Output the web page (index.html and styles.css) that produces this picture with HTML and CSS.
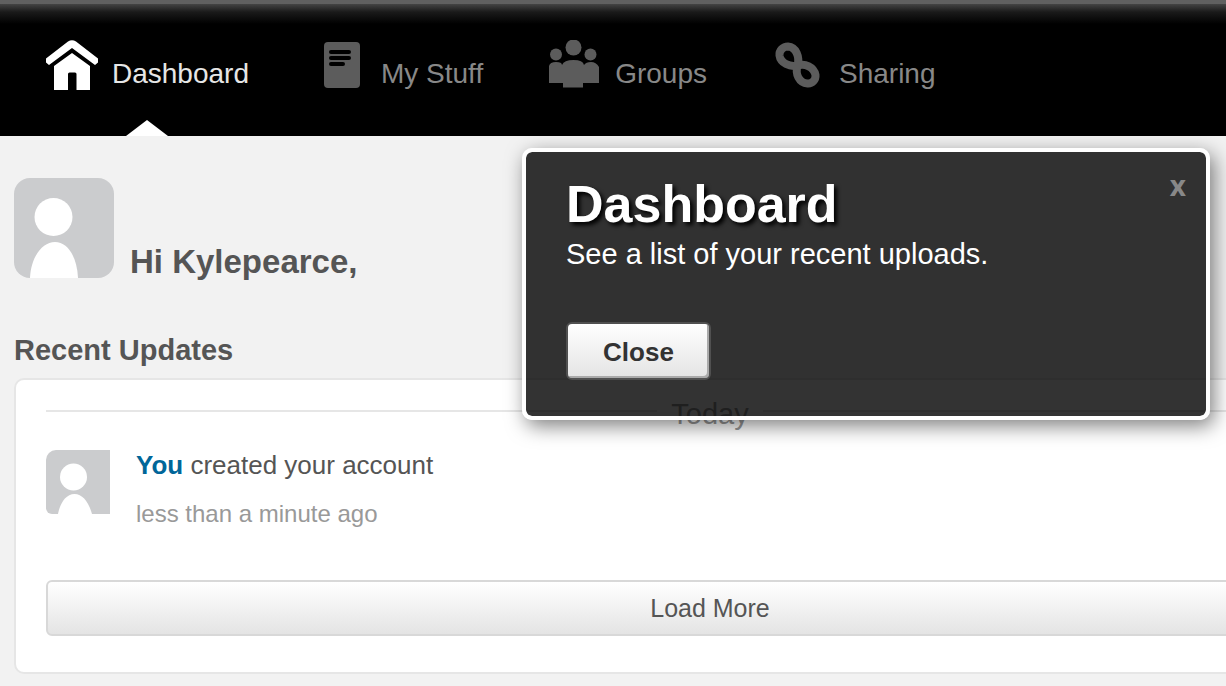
FILE: index.html
```
<!DOCTYPE html>
<html lang="en">
<head>
  <title>Dashboard</title>
  <meta charset="UTF-8">
  <link rel="stylesheet" href="styles.css">
</head>
<body>
  <header class="header">
    <nav class="main-nav">
      <a href="#" class="nav-item active">
        <svg class="nav-icon" viewBox="0 0 52 50" aria-hidden="true">
          <path d="M0 18.500 22 1.500Q26-1.200 30 1.500L52 18.500V22.500L49 25 26 8 3 25 0 22.500Z"/>
          <path d="M8 26 26 13 44 26V50H30.500V34Q30.500 32.500 29 32.500H23.500Q22 32.500 22 34V50H8Z"/>
        </svg>
        <span>Dashboard</span>
      </a>
      <a href="#" class="nav-item">
        <svg class="nav-icon" viewBox="0 0 52 50" aria-hidden="true">
          <rect x="9" y="2" width="36" height="46" rx="4"/>
          <path class="ink" d="M16 12H34M16 18H34M16 24H28"/>
        </svg>
        <span>My Stuff</span>
      </a>
      <a href="#" class="nav-item">
        <svg class="nav-icon" viewBox="0 0 52 50" aria-hidden="true">
          <circle cx="24.500" cy="7.500" r="8"/>
          <circle cx="7" cy="14.500" r="6"/>
          <circle cx="41.500" cy="14.500" r="6"/>
          <path d="M0 43V26Q1 22 7 22T13 25Q15 20 24.500 20T35 25Q37 22 42 22T50 27V43H34V47.500H14V43Z"/>
        </svg>
        <span>Groups</span>
      </a>
      <a href="#" class="nav-item">
        <svg class="nav-icon" viewBox="0 0 52 50" aria-hidden="true">
          <path class="loop" d="M24.500 25.500C27 17 23 7 15 6.500 10 6.500 6 10.500 6.500 15.500 7.500 23 17 27.500 24.500 25.500 32 23 41 27 42.500 35 43 40 39 44 34.500 43.500 26 43 22 34 24.500 25.500Z"/>
        </svg>
        <span>Sharing</span>
      </a>
    </nav>
  </header>

  <main class="content">
    <div class="greeting">
      <svg class="avatar" viewBox="0 0 100 100" role="img" aria-label="Kylepearce">
        <rect width="100" height="100" fill="#cbccce"/>
        <circle cx="39.500" cy="39" r="19"/>
        <path d="M16 100C17 79 28 64 41 64S63 79 64 100Z"/>
      </svg>
      <h1>Hi Kylepearce,</h1>
    </div>

    <h2 class="section-title">Recent Updates</h2>
    <section class="panel">
      <div class="day">
        <span class="day-label">Today</span>
      </div>
      <div class="update">
        <svg class="avatar-small" viewBox="0 0 64 64" role="img" aria-label="You">
          <rect width="64" height="64" fill="#cbccce"/>
          <circle cx="27.500" cy="27" r="13.500"/>
          <path d="M12 64C14 53 20 44 28.500 44S43 53 46 64Z"/>
        </svg>
        <div>
          <p class="update-text"><a href="#">You</a> created your account</p>
          <p class="update-time">less than a minute ago</p>
        </div>
      </div>
      <button type="button" class="load-more">Load More</button>
    </section>
  </main>

  <div class="tour" role="dialog" aria-labelledby="tourTitle">
    <button type="button" class="tour-x" aria-label="Dismiss">x</button>
    <h2 id="tourTitle">Dashboard</h2>
    <p>See a list of your recent uploads.</p>
    <button type="button" class="tour-close">Close</button>
  </div>
</body>
</html>
```
FILE: styles.css
```
* {
  box-sizing: border-box;
}
html {
  overflow-x: hidden;
}
body {
  position: relative;
  margin: 0;
  min-height: 100vh;
  overflow-x: hidden;
  font-family: "Liberation Sans", Arial, sans-serif;
  color: #555;
  background-color: #f2f2f2;
}
h1, h2, p {
  margin: 0;
}
button {
  font-family: inherit;
  cursor: pointer;
}

/* Navigation */
.header {
  border-top: 4px solid #606060;
  background: #000 linear-gradient(#444, #1a1a1a 8px, #000 20px) no-repeat;
}
.main-nav {
  display: flex;
  gap: 66px;
  padding: 36px 46px 0;
}
.nav-item {
  position: relative;
  display: flex;
  gap: 14px;
  height: 96px;
  font-size: 28px;
  line-height: 34px;
  color: #888;
  text-decoration: none;
  white-space: nowrap;
}
.nav-item span {
  padding-top: 17px;
}
.nav-item.active {
  color: #e6e6e6;
}
.nav-item.active::after {
  content: "";
  position: absolute;
  left: 50%;
  bottom: 0;
  margin-left: -21px;
  border: 21px solid transparent;
  border-top-width: 0;
  border-bottom: 16px solid #fff;
}
.nav-icon {
  width: 52px;
  height: 50px;
  fill: #5c5c5c;
}
.active .nav-icon {
  fill: #fff;
}
.nav-icon .ink {
  stroke: #000;
  stroke-width: 4;
  stroke-linecap: round;
}
.nav-icon .loop {
  fill: none;
  stroke: #5c5c5c;
  stroke-width: 8;
}

/* Page content runs past the right edge of the window */
.content {
  margin-right: -180px;
  padding: 42px 0 12px 14px;
}
.greeting {
  display: flex;
  align-items: flex-end;
  gap: 16px;
}
.greeting h1 {
  font-size: 33px;
  line-height: 32px;
}
.avatar,
.avatar-small {
  flex: none;
  fill: #fff;
}
.avatar {
  width: 100px;
  height: 100px;
  border-radius: 16px;
}
.avatar-small {
  width: 64px;
  height: 64px;
  border-radius: 10px 0 0 6px;
}
.section-title {
  margin: 55px 0 11px;
  font-size: 29px;
  line-height: 34px;
}
.panel {
  padding: 20px 30px 36px;
  border: 2px solid #e6e6e6;
  border-radius: 10px;
  background-color: #fff;
}
.day {
  display: flex;
  gap: 14px;
  font-size: 29px;
  line-height: 28px;
  color: #999;
}
.day::before,
.day::after {
  content: "";
  flex: 1;
  height: 2px;
  margin-top: 10px;
  background-color: #e6e6e6;
}
.update {
  display: flex;
  gap: 26px;
  margin: 22px 0 52px;
}
.update-text {
  font-size: 26px;
  line-height: 30px;
}
.update-text a {
  font-weight: bold;
  color: #069;
  text-decoration: none;
}
.update-time {
  margin-top: 20px;
  font-size: 24px;
  line-height: 28px;
  color: #999;
}
.load-more {
  display: block;
  width: 100%;
  height: 56px;
  border: 2px solid #d8d8d8;
  border-radius: 6px;
  font-size: 25px;
  color: #555;
  background: linear-gradient(#fff, #e4e4e4);
}

/* Tour popup */
.tour {
  position: absolute;
  top: 148px;
  right: 16px;
  width: 688px;
  max-width: calc(100% - 32px);
  padding: 20px 40px 36px;
  border: 4px solid #fff;
  border-radius: 10px;
  color: #fff;
  background: rgba(0, 0, 0, 0.8) padding-box;
  box-shadow: 4px 6px 20px rgba(0, 0, 0, 0.5);
}
.tour h2 {
  font-size: 52px;
  line-height: 64px;
  text-shadow: 3px 3px 4px #000;
}
.tour p {
  font-size: 29px;
  line-height: 36px;
}
.tour-close {
  width: 145px;
  height: 58px;
  margin-top: 50px;
  padding-top: 3px;
  border: 2px solid #505050;
  border-radius: 6px;
  font-size: 26px;
  font-weight: bold;
  color: #333;
  background: linear-gradient(#fff, #e4e4e4);
  box-shadow: inset -2px -2px 0 #aaa;
}
.tour-x {
  position: absolute;
  top: 17px;
  right: 20px;
  padding: 0;
  border: 0;
  font-family: "Open Sans", sans-serif;
  font-size: 28px;
  font-weight: bold;
  line-height: 32px;
  color: #888;
  background: none;
}
```
